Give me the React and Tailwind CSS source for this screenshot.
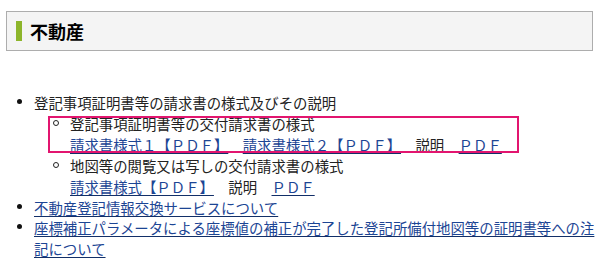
import React from 'react';

const linkCls = 'text-[#1c4594] underline decoration-[#122f68] underline-offset-[2px]';

const Disc = () => (
  <span className="w-[34px] shrink-0 pt-[6px] pl-[17px]">
    <span className="block w-[5px] h-[5px] rounded-full bg-[#111]" />
  </span>
);

const Circle = () => (
  <span className="w-[36px] shrink-0 pt-[6px] pl-[19px]">
    <span className="block w-[6px] h-[6px] rounded-full border border-[#222]" />
  </span>
);

const App = () => {
  return (
    <div
      className="relative w-[609px] h-[263px] bg-white overflow-hidden text-[#222] [text-spacing-trim:space-all]"
      style={{ fontFamily: '"Noto Sans CJK JP", "Noto Sans", sans-serif' }}
    >
      <div className="pt-[11px] pl-[6px]">
        <div className="w-[587px] h-[40px] border border-[#adadad] bg-[#f4f4f4] flex items-center pl-[9px]">
          <span className="w-[6px] h-[20px] bg-[#8db52b]" />
          <h1 className="ml-[8px] text-[18px] font-bold text-black leading-none">不動産</h1>
        </div>
      </div>

      <div className="mt-[42px] pr-[8px] text-[14.4px] leading-[20.9px]">
        <div className="flex">
          <Disc />
          <div className="flex-1">
            <div>登記事項証明書等の請求書の様式及びその説明</div>
            <div className="flex">
              <Circle />
              <div className="flex-1">
                <div>登記事項証明書等の交付請求書の様式</div>
                <div>
                  <a href="#" className={linkCls}>請求書様式１【ＰＤＦ】</a>　<a href="#" className={linkCls}>請求書様式２【ＰＤＦ】</a>　説明　<a href="#" className={linkCls}>ＰＤＦ</a>
                </div>
              </div>
            </div>
            <div className="flex">
              <Circle />
              <div className="flex-1">
                <div>地図等の閲覧又は写しの交付請求書の様式</div>
                <div>
                  <a href="#" className={linkCls}>請求書様式【ＰＤＦ】</a>　説明　<a href="#" className={linkCls}>ＰＤＦ</a>
                </div>
              </div>
            </div>
          </div>
        </div>
        <div className="flex">
          <Disc />
          <div className="flex-1">
            <a href="#" className={linkCls}>不動産登記情報交換サービスについて</a>
          </div>
        </div>
        <div className="flex">
          <Disc />
          <div className="flex-1">
            <a href="#" className={linkCls}>座標補正パラメータによる座標値の補正が完了した登記所備付地図等の証明書等への注記について</a>
          </div>
        </div>
      </div>

      {/* highlight annotation */}
      <div className="absolute left-[48px] top-[116px] w-[471px] h-[37px] border-2 border-[#e2156f]" />
    </div>
  );
};

export default App;
